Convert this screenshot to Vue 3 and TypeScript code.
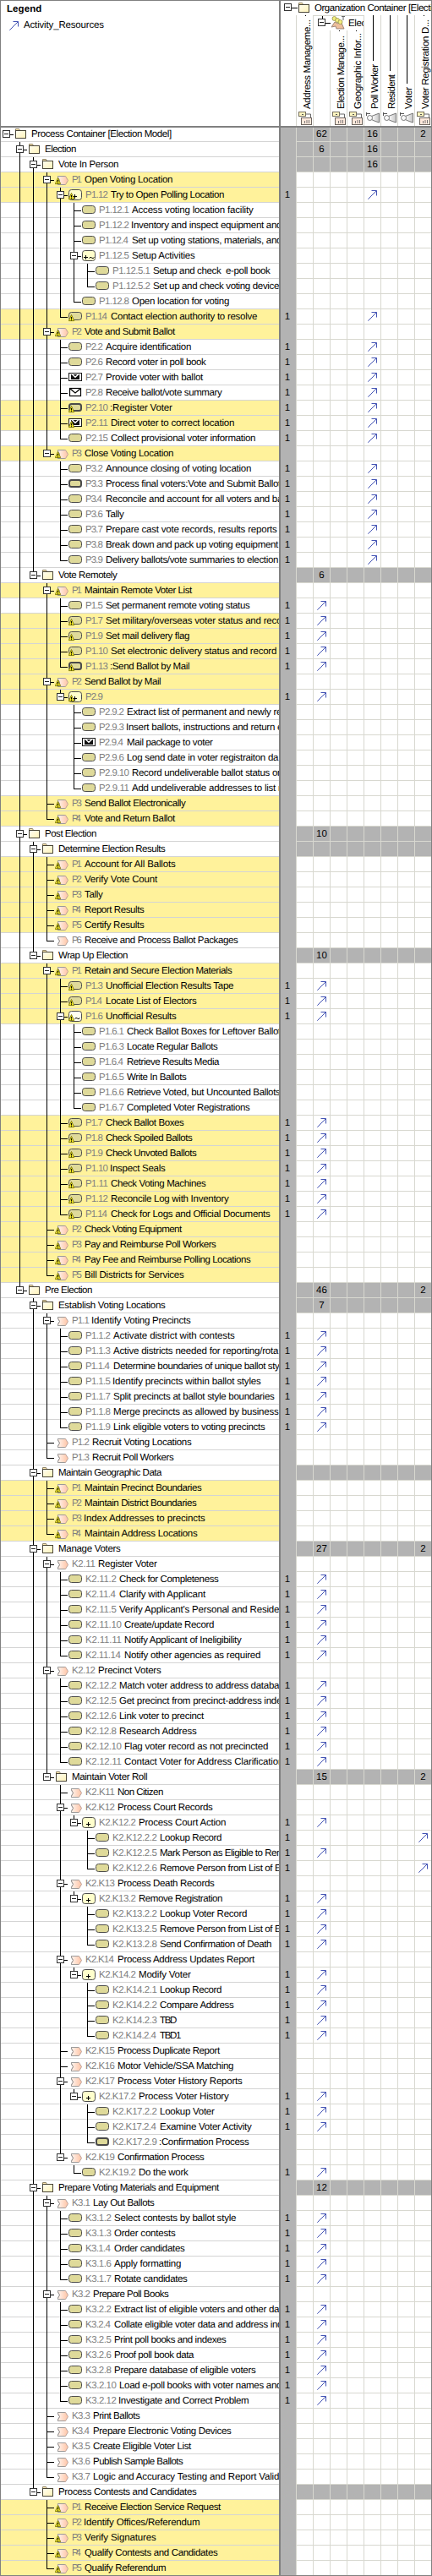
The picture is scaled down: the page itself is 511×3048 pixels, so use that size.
<script setup lang="ts">
type Kind = 'folder' | 'process' | 'task' | 'sub' | 'loop' | 'tilde' | 'call' | 'send' | 'receive'

interface Fit {
  marginLeft: string
  letterSpacing: string
  width: string
}

interface Row {
  depth: number
  kind: Kind
  warn: boolean
  code: string
  name: string
  codeStyle: Fit
  nameStyle: Fit
  cells: string[]
  arrow: number
  open: boolean
  path: string
}

const kinds: Record<string, Kind> = {
  f: 'folder', p: 'process', a: 'task', s: 'sub', l: 'loop', t: 'tilde', c: 'call', m: 'send', r: 'receive',
}

// depth | kind (upper case = warning) | code | name | arrow column, or column:total pairs | right edge of the label
const source = `
0|f||Process Container [Election Model]|1:62,4:16,7:2|203
1|f||Election|1:6,4:16|90
2|f||Vote In Person|4:16|140
3|P|P1|Open Voting Location||204
4|S|P1.12|Try to Open Polling Location|4|265
5|a|P1.12.1|Access voting location facility||300
5|a|P1.12.2|Inventory and inspect equipment and||333
5|a|P1.12.4|Set up voting stations, materials, and||333
5|l|P1.12.5|Setup Activities||231
6|a|P1.12.5.1|Setup and check  e-poll book||320
6|a|P1.12.5.2|Set up and check voting devices||336
5|a|P1.12.8|Open location for voting||271
4|A|P1.14|Contact election authority to resolve|4|304
3|P|P2|Vote and Submit Ballot||208
4|a|P2.2|Acquire identification|4|226
4|a|P2.6|Record voter in poll book|4|244
4|m|P2.7|Provide voter with ballot|4|241
4|r|P2.8|Receive ballot/vote summary|4|263
4|C|P2.10|:Register Voter|4|204
4|M|P2.11|Direct voter to correct location|4|277
4|a|P2.15|Collect provisional voter information|4|302
3|P|P3|Close Voting Location||205
4|a|P3.2|Announce closing of voting location|4|297
4|c|P3.3|Process final voters:Vote and Submit Ballot|4|333
4|a|P3.4|Reconcile and account for all voters and ba|4|335
4|a|P3.6|Tally|4|147
4|a|P3.7|Prepare cast vote records, results reports|4|328
4|a|P3.8|Break down and pack up voting equipment|4|330
4|a|P3.9|Delivery ballots/vote summaries to election|4|329
2|f||Vote Remotely|1:6|139
3|P|P1|Maintain Remote Voter List||228
4|a|P1.5|Set permanent remote voting status|1|296
4|A|P1.7|Set military/overseas voter status and reco|1|333
4|A|P1.9|Set mail delivery flag|1|224
4|A|P1.10|Set electronic delivery status and record|1|327
4|C|P1.13|:Send Ballot by Mail|1|224
3|P|P2|Send Ballot by Mail||190
4|S|P2.9||1|122
5|a|P2.9.2|Extract list of permanent and newly re||333
5|a|P2.9.3|Insert ballots, instructions and return e||334
5|m|P2.9.4|Mail package to voter||252
5|a|P2.9.6|Log send date in voter registraiton da||330
5|a|P2.9.10|Record undeliverable ballot status on||334
5|a|P2.9.11|Add undeliverable addresses to list m||338
3|P|P3|Send Ballot Electronically||220
3|P|P4|Vote and Return Ballot||208
1|f||Post Election|1:10|114
2|f||Determine Election Results||196
3|P|P1|Account for All Ballots||208
3|P|P2|Verify Vote Count||187
3|P|P3|Tally||122
3|P|P4|Report Results||171
3|P|P5|Certify Results||171
3|p|P6|Receive and Process Ballot Packages||282
2|f||Wrap Up Election|1:10|151
3|P|P1|Retain and Secure Election Materials||275
4|A|P1.3|Unofficial Election Results Tape|1|276
4|A|P1.4|Locate List of Electors|1|233
4|T|P1.6|Unofficial Results|1|209
5|a|P1.6.1|Check Ballot Boxes for Leftover Ballot||333
5|a|P1.6.3|Locate Regular Ballots||258
5|a|P1.6.4|Retrieve Results Media||260
5|a|P1.6.5|Write In Ballots||221
5|a|P1.6.6|Retrieve Voted, but Uncounted Ballots||332
5|a|P1.6.7|Completed Voter Registrations||296
4|A|P1.7|Check Ballot Boxes|1|218
4|A|P1.8|Check Spoiled Ballots|1|228
4|A|P1.9|Check Unvoted Ballots|1|233
4|A|P1.10|Inspect Seals|1|196
4|A|P1.11|Check Voting Machines|1|244
4|A|P1.12|Reconcile Log with Inventory|1|271
4|A|P1.14|Check for Logs and Official Documents|1|320
3|P|P2|Check Voting Equipment||216
3|P|P3|Pay and Reimburse Poll Workers||256
3|P|P4|Pay Fee and Reimburse Polling Locations||297
3|P|P5|Bill Districts for Services||218
1|f||Pre Election|1:46,7:2|109
2|f||Establish Voting Locations|1:7|196
3|p|P1.1|Identify Voting Precincts||226
4|a|P1.1.2|Activate district with contests|1|278
4|a|P1.1.3|Active districts needed for reporting/rota|1|330
4|a|P1.1.4|Determine boundaries of unique ballot sty|1|331
4|a|P1.1.5|Identify precincts within ballot styles|1|309
4|a|P1.1.7|Split precincts at ballot style boundaries|1|325
4|a|P1.1.8|Merge precincts as allowed by business|1|330
4|a|P1.1.9|Link eligible voters to voting precincts|1|314
3|p|P1.2|Recruit Voting Locations||227
3|p|P1.3|Recruit Poll Workers||206
2|f||Maintain Geographic Data||192
3|P|P1|Maintain Precinct Boundaries||239
3|P|P2|Maintain District Boundaries||233
3|P|P3|Index Addresses to precincts||243
3|P|P4|Maintain Address Locations||234
2|f||Manage Voters|1:27,7:2|143
3|p|K2.11|Register Voter||186
4|a|K2.11.2|Check for Completeness|1|259
4|a|K2.11.4|Clarify with Applicant|1|244
4|a|K2.11.5|Verify Applicant's Personal and Reside|1|330
4|a|K2.11.10|Create/update Record|1|253
4|a|K2.11.11|Notify Applicant of Ineligibility|1|286
4|a|K2.11.14|Notify other agencies as required|1|308
3|p|K2.12|Precinct Voters||191
4|a|K2.12.2|Match voter address to address databa|1|331
4|a|K2.12.5|Get precinct from precinct-address inde|1|333
4|a|K2.12.6|Link voter to precinct|1|242
4|a|K2.12.8|Research Address|1|233
4|a|K2.12.10|Flag voter record as not precincted|1|317
4|a|K2.12.11|Contact Voter for Address Clarification|1|335
3|f||Maintain Voter Roll|1:15,7:2|174
4|p|K2.K11|Non Citizen||193
4|p|K2.K12|Process Court Records||252
5|s|K2.K12.2|Process Court Action|1|267
6|a|K2.K12.2.2|Lookup Record|7|262
6|a|K2.K12.2.5|Mark Person as Eligible to Rem|1|336
6|a|K2.K12.2.6|Remove Person from List of E|7|333
4|p|K2.K13|Process Death Records||254
5|s|K2.K13.2|Remove Registration|1|263
6|a|K2.K13.2.2|Lookup Voter Record|1|292
6|a|K2.K13.2.5|Remove Person from List of E|1|333
6|a|K2.K13.2.8|Send Confirmation of Death|1|321
4|p|K2.K14|Process Address Updates Report||302
5|s|K2.K14.2|Modify Voter|1|226
6|a|K2.K14.2.1|Lookup Record|1|262
6|a|K2.K14.2.2|Compare Address|1|277
6|a|K2.K14.2.3|TBD|1|209
6|a|K2.K14.2.4|TBD1|1|214
4|p|K2.K15|Process Duplicate Report||261
4|p|K2.K16|Motor Vehicle/SSA Matching||276
4|p|K2.K17|Process Voter History Reports||287
5|s|K2.K17.2|Process Voter History|1|271
6|a|K2.K17.2.2|Lookup Voter|1|254
6|a|K2.K17.2.4|Examine Voter Activity|1|298
6|c|K2.K17.2.9|:Confirmation Process||295
4|p|K2.K19|Confirmation Process||242
5|a|K2.K19.2|Do the work|1|223
2|f||Prepare Voting Materials and Equipment|1:12|260
3|p|K3.1|Lay Out Ballots||183
4|a|K3.1.2|Select contests by ballot style|1|279
4|a|K3.1.3|Order contests|1|208
4|a|K3.1.4|Order candidates|1|219
4|a|K3.1.6|Apply formatting|1|214
4|a|K3.1.7|Rotate candidates|1|222
3|p|K3.2|Prepare Poll Books||200
4|a|K3.2.2|Extract list of eligible voters and other da|1|331
4|a|K3.2.4|Collate eligible voter data and address ind|1|334
4|a|K3.2.5|Print poll books and indexes|1|268
4|a|K3.2.6|Proof poll book data|1|230
4|a|K3.2.8|Prepare database of eligible voters|1|303
4|a|K3.2.10|Load e-poll books with voter names and|1|333
4|a|K3.2.12|Investigate and Correct Problem|1|294
3|p|K3.3|Print Ballots||166
3|p|K3.4|Prepare Electronic Voting Devices||274
3|p|K3.5|Create Eligible Voter List||227
3|p|K3.6|Publish Sample Ballots||217
3|p|K3.7|Logic and Accuracy Testing and Report Valid||330
2|f||Process Contests and Candidates||233
3|P|P1|Receive Election Service Request||262
3|P|P2|Identify Offices/Referendum||236
3|P|P3|Verify Signatures||185
3|P|P4|Qualify Contests and Candidates||258
3|P|P5|Qualify Referendum||196
`

const lines = source.trim().split('\n').map((l) => l.split('|'))
const depths = lines.map((l) => Number(l[0]))

const pen = document.createElement('canvas').getContext('2d')!
pen.font = '11.5px "Liberation Sans"'
;(pen as any).textRendering = 'geometricPrecision'

// letter spacing that makes the ink of `text` span `ink` pixels inside a box of `box` pixels
function fit(text: string, ink: number, box: number): Fit {
  if (!text) return { marginLeft: '0px', letterSpacing: '0px', width: '0px' }
  const m = pen.measureText(text)
  const natural = m.actualBoundingBoxRight + m.actualBoundingBoxLeft
  const gap = text.length > 1 ? (ink - natural) / (text.length - 1) : 0
  const shift = m.actualBoundingBoxLeft
  return {
    marginLeft: `${shift.toFixed(2)}px`,
    letterSpacing: `${gap.toFixed(3)}px`,
    width: `${(box - shift).toFixed(2)}px`,
  }
}

function codeWidth(code: string): number {
  if (!code) return 0
  let w = 3
  for (const ch of code) w += ch === '.' ? 3 : ch === 'K' ? 7 : 6
  return w
}

// true when the branch at `level` goes on below row i
function continues(i: number, level: number): boolean {
  for (let j = i + 1; j < depths.length; j++) {
    if (depths[j] < level) return false
    if (depths[j] === level) return true
  }
  return false
}

function guidePath(i: number, open: boolean): string {
  const d = depths[i]
  let p = ''
  for (let k = 1; k < d; k++) {
    if (continues(i, k)) p += `M${7 + 16 * k} 0h1v18h-1z`
  }
  const x = 7 + 16 * d
  const next = continues(i, d)
  if (open) {
    if (d > 0) p += `M${x} 0h1v4h-1z`
    if (next) p += `M${x} 13h1v5h-1z`
    p += `M${x + 5} 9h4v1h-4z`
  } else {
    p += `M${x} 0h1v${next ? 18 : 10}h-1z`
    p += `M${x + 1} 9h8v1h-8z`
  }
  return p
}

const rows: Row[] = lines.map((l, i) => {
  const depth = depths[i]
  const open = i + 1 < depths.length && depths[i + 1] > depth
  const cells: string[] = Array(8).fill('')
  let arrow = -1
  if (l[4].includes(':')) {
    for (const pair of l[4].split(',')) {
      const [c, v] = pair.split(':')
      cells[Number(c)] = v
    }
  } else if (l[4]) {
    arrow = Number(l[4])
  }
  const cw = codeWidth(l[2])
  const start = 37 + 16 * depth + cw
  const ink = Number(l[5]) - start
  return {
    depth,
    kind: kinds[l[1].toLowerCase()],
    warn: l[1] !== l[1].toLowerCase(),
    code: l[2],
    name: l[3],
    codeStyle: fit(l[2], cw - 3.5, cw),
    nameStyle: fit(l[3], ink, ink + 4),
    cells,
    arrow,
    open,
    path: guidePath(i, open),
  }
})

interface Col {
  name: string
  icon: string
  length: number
  stem: number
}

const addressCol: Col = { name: 'Address Manageme...', icon: 'system', length: 106, stem: 1 }
const groupCols: Col[] = [
  { name: 'Election Manage...', icon: 'system', length: 87, stem: 18 },
  { name: 'Geographic Infor...', icon: 'system', length: 90, stem: 18 },
]
const lastCols: Col[] = [
  { name: 'Poll Worker', icon: 'actor', length: 53, stem: 54 },
  { name: 'Resident', icon: 'actor', length: 41, stem: 66 },
  { name: 'Voter', icon: 'actor', length: 26, stem: 81 },
  { name: 'Voter Registration D...', icon: 'system', length: 106, stem: 1 },
]
</script>

<template>
  <svg class="defs" width="0" height="0">
    <defs>
      <linearGradient id="gFolder" x1="0" x2="1" y1="0" y2="1">
        <stop offset="0" stop-color="#fffef2" />
        <stop offset="1" stop-color="#fff3b8" />
      </linearGradient>
      <linearGradient id="gPeach" x1="0" x2="1">
        <stop offset="0" stop-color="#fff4ee" />
        <stop offset="1" stop-color="#ffc3a4" />
      </linearGradient>
      <linearGradient id="gGrey" x1="0" x2="1">
        <stop offset="0" stop-color="#ffffff" />
        <stop offset="1" stop-color="#c4c4c4" />
      </linearGradient>
      <symbol id="folder" viewBox="0 0 16 18">
        <path d="M1.5 4.5v-2h4l1 2z" fill="#ffe9b0" stroke="#8f8468" />
        <rect x="1.5" y="4.5" width="12" height="9" fill="url(#gFolder)" stroke="#4a4638" />
      </symbol>
      <symbol id="process" viewBox="0 0 16 18">
        <path d="M3.5 4.5h9l3 5-3 5h-9v-1.500l2-3.500-2-3.500z" fill="url(#gPeach)" stroke="#b9a199" />
        <path d="M3.500 4.500h8M3.500 14.500h8M3.500 4.500v1.500l2 3.500-2 3.500v1.500" fill="none" stroke="#9a9a9a" />
      </symbol>
      <symbol id="task" viewBox="0 0 16 18">
        <rect x=".5" y="3.500" width="15" height="9" rx="3" fill="#dfda9a" stroke="#4d4d4d" />
      </symbol>
      <symbol id="call" viewBox="0 0 16 18">
        <rect x="1" y="4" width="14" height="8" rx="2.500" fill="#dfda9a" stroke="#4a4a4a" stroke-width="2" />
      </symbol>
      <symbol id="sub" viewBox="0 0 16 18">
        <rect x=".5" y="2.500" width="15" height="12" rx="3" fill="#ffffcc" stroke="#4d4d4d" />
        <path d="M5 10h5v1H5zM7 8h1v5H7z" fill="#000" />
      </symbol>
      <symbol id="loop" viewBox="0 0 16 18">
        <rect x=".5" y="2.500" width="15" height="12" rx="3" fill="#ffffcc" stroke="#4d4d4d" />
        <path d="M2 10h5v1H2zM4 8h1v5H4z" fill="#000" />
        <path d="M8.500 11.500q1.500-2 3 -.5t3-.5" fill="none" stroke="#000" />
      </symbol>
      <symbol id="tilde" viewBox="0 0 16 18">
        <rect x=".5" y="2.500" width="15" height="12" rx="3" fill="#fffff0" stroke="#4d4d4d" />
        <path d="M7.500 11.500q1.500-2 3 -.5t3-.5" fill="none" stroke="#000" />
      </symbol>
      <symbol id="send" viewBox="0 0 16 18">
        <rect x="0" y="3" width="16" height="10" fill="#1a1a1a" />
        <rect x="1" y="4" width="14" height="8" fill="#fff" />
        <rect x="3" y="5" width="10" height="6" fill="#111" />
        <path d="M4 4.500l4 3.700 4-3.700" fill="none" stroke="#fff" stroke-width="1.500" />
      </symbol>
      <symbol id="receive" viewBox="0 0 16 18">
        <rect x="1.500" y="3.500" width="13" height="9" fill="#fff" stroke="#000" stroke-width="1.200" />
        <path d="M2 4l6 5 6-5" fill="none" stroke="#000" stroke-width="1.300" />
      </symbol>
      <symbol id="warn" viewBox="0 0 16 18">
        <path d="M3.500 6.500L6.700 13.600H.3z" fill="#f4ea2c" stroke="#85800e" />
        <path d="M3 9h1v2.500H3zM3 12.200h1v1H3z" fill="#000" />
      </symbol>
      <symbol id="minus" viewBox="0 0 9 9">
        <rect x=".5" y=".5" width="8" height="8" fill="#fff" stroke="#333" />
        <path d="M2 4h5v1H2z" fill="#222" />
      </symbol>
      <symbol id="arrow" viewBox="0 0 11 11">
        <path d="M.3 10.700L10.300.7M4.500.500h6v6" fill="none" stroke="#4353b4" />
      </symbol>
      <symbol id="system" viewBox="0 0 16 16">
        <rect x=".5" y=".5" width="8" height="5" fill="#fff6c0" stroke="#76705e" />
        <path d="M4 3h2v1H4z" fill="#555" />
        <path d="M9 3h5.500v4" fill="none" stroke="#666" />
        <rect x="3.500" y="7.500" width="12" height="8" fill="#ffe9dc" stroke="#6e6660" />
        <path d="M7 11h1v3H7zM9.500 10h1v4h-1zM12 10h1v4h-1z" fill="#777" />
      </symbol>
      <symbol id="actor" viewBox="0 0 16 16">
        <path d="M6.500 5.500L15.500 2v11L11 11.500 6.500 9.500z" fill="url(#gGrey)" stroke="#777" />
        <circle cx="4.500" cy="7.500" r="3" fill="#f8f8f8" stroke="#777" />
        <path d="M.5 1v4M.5 2.500h4.500" fill="none" stroke="#555" />
      </symbol>
      <symbol id="group" viewBox="0 0 16 16">
        <path d="M0 13l4-6 4 2 3-3 4 9H6l-1-3z" fill="#eebf9c" stroke="#8b7264" stroke-width=".8" />
        <circle cx="3.500" cy="3" r="2.500" fill="#f3ee7d" stroke="#96924e" stroke-width=".8" />
        <circle cx="7" cy="5" r="2.500" fill="#f3ee7d" stroke="#96924e" stroke-width=".8" />
        <circle cx="10.500" cy="7" r="2.500" fill="#f3ee7d" stroke="#96924e" stroke-width=".8" />
        <path d="M12 .5h4M14 1v4" fill="none" stroke="#666" />
      </symbol>
    </defs>
  </svg>
  <div class="matrix">
    <div class="head">
      <div class="legend">
        <div class="legend-title">Legend</div>
        <div class="legend-item">
          <svg width="11" height="11"><use href="#arrow" /></svg>
          <span>Activity_Resources</span>
        </div>
      </div>
      <div class="cols">
        <div class="org">
          <svg width="39" height="17">
            <path d="M13 8h7v1h-7z" fill="#000" />
            <use href="#minus" x="4" y="3" width="9" height="9" />
            <use href="#folder" x="20" y="0" width="16" height="18" />
          </svg>
          <span>Organization Container [Election Model]</span>
        </div>
        <div class="col-row">
          <div class="gap"></div>
          <div class="col">
            <svg class="vlabel" width="19" height="131">
              <rect x="10" y="0" width="1" :height="addressCol.stem" />
              <text transform="translate(15.500 111) rotate(-90)" :textLength="addressCol.length">{{ addressCol.name }}</text>
              <use :href="'#' + addressCol.icon" x="2" y="114" width="16" height="16" />
            </svg>
          </div>
          <div class="group">
            <div class="group-head">
              <svg width="41" height="17">
                <path d="M10 0h1v3h-1zM14 8h6v1h-6z" fill="#000" />
                <use href="#minus" x="5" y="3" width="9" height="9" />
                <use href="#group" x="21" y="0" width="16" height="16" />
              </svg>
              <span>Elec</span>
            </div>
            <div class="group-cols">
              <div class="col first"></div>
              <div v-for="c in groupCols" :key="c.name" class="col">
                <svg class="vlabel" width="19" height="113" viewBox="0 18 19 113">
                  <rect x="10" y="18" width="1" height="1" />
                  <text transform="translate(15.500 111) rotate(-90)" :textLength="c.length">{{ c.name }}</text>
                  <use :href="'#' + c.icon" x="2" y="114" width="16" height="16" />
                </svg>
              </div>
            </div>
          </div>
          <div v-for="c in lastCols" :key="c.name" class="col">
            <svg class="vlabel" width="19" height="131">
              <rect x="10" y="0" width="1" :height="c.stem" />
              <text transform="translate(15.500 111) rotate(-90)" :textLength="c.length">{{ c.name }}</text>
              <use :href="'#' + c.icon" x="2" y="114" width="16" height="16" />
            </svg>
          </div>
        </div>
      </div>
    </div>
    <div class="body">
      <div v-for="(r, i) in rows" :key="i" class="row">
        <div class="tree" :class="{ hot: r.warn }">
          <svg class="guides" :width="33 + 16 * r.depth" height="18">
            <path :d="r.path" fill="#000" />
            <use v-if="r.open" href="#minus" :x="3 + 16 * r.depth" y="4" width="9" height="9" />
            <use :href="'#' + r.kind" :x="17 + 16 * r.depth" y="0" width="16" height="18" />
            <use v-if="r.warn" href="#warn" :x="17 + 16 * r.depth" y="0" width="16" height="18" />
          </svg>
          <span v-if="r.code" class="code" :style="r.codeStyle">{{ r.code }}</span>
          <span v-if="r.name" class="name" :style="r.nameStyle">{{ r.name }}</span>
        </div>
        <div class="count">{{ r.arrow >= 0 ? '1' : '' }}</div>
        <div v-for="(c, k) in r.cells" :key="k" class="cell" :class="{ total: r.kind === 'folder' }">
          <svg v-if="r.arrow === k" width="11" height="11"><use href="#arrow" /></svg>
          <template v-else>{{ c }}</template>
        </div>
      </div>
    </div>
  </div>
</template>

<style>
body {
  margin: 0;
  background: #fff;
}
</style>

<style scoped>
.defs {
  display: block;
}
svg {
  display: block;
  flex: none;
}
.matrix {
  box-sizing: border-box;
  width: 511px;
  height: 3048px;
  border: 1px solid #808080;
  background: #fff;
  font: 11.5px/18px "Liberation Sans", Arial, sans-serif;
  text-rendering: geometricPrecision;
  color: #000;
  overflow: hidden;
}
.head {
  display: flex;
  height: 148px;
  border-bottom: 2px solid #808080;
}
.legend {
  width: 329px;
  border-right: 2px solid #808080;
  flex: none;
}
.legend-title {
  font-weight: bold;
  letter-spacing: 0.1px;
  padding: 1px 0 0 7px;
}
.legend-item {
  display: flex;
  align-items: center;
  gap: 6px;
  padding: 1px 0 0 10px;
  letter-spacing: -0.16px;
}
.cols {
  width: 178px;
  overflow: hidden;
}
.org {
  display: flex;
  height: 17px;
  white-space: nowrap;
  letter-spacing: -0.46px;
}
.org span {
  margin-left: 1px;
}
.col-row {
  display: flex;
  height: 131px;
}
.gap {
  width: 18px;
  flex: none;
}
.col {
  box-sizing: border-box;
  width: 20px;
  flex: none;
  border-left: 1px solid #d6d6ce;
  overflow: hidden;
}
.col.first {
  border-left: 0;
  width: 19px;
}
.vlabel {
  font-size: 11.5px;
}
.group {
  box-sizing: border-box;
  width: 60px;
  border: 1px solid #d6d6ce;
  border-width: 1px 0 0 1px;
  display: flex;
  flex-direction: column;
  overflow: hidden;
}
.group-head {
  display: flex;
  height: 17px;
  white-space: nowrap;
  line-height: 19px;
  letter-spacing: -0.4px;
}
.group-cols {
  display: flex;
  flex: 1;
}
.body {
  display: flex;
  flex-direction: column;
}
.row {
  display: flex;
  align-items: flex-end;
  height: 18px;
  flex: none;
  overflow: hidden;
}
.row:first-child {
  height: 17px;
}
.tree {
  display: flex;
  width: 329px;
  height: 18px;
  flex: none;
  overflow: hidden;
  border-right: 2px solid #808080;
  box-shadow: inset 0 -1px #d4d4d4;
}
.tree.hot {
  background: #fff29b;
}
.guides {
  margin: 0 4px 0 -1px;
}
.code,
.name {
  flex: none;
  white-space: pre;
}
.code {
  color: #808080;
}
.count {
  width: 16px;
  padding-right: 2px;
  height: 18px;
  background: #b3b3b3;
  text-align: center;
  flex: none;
}
.cell {
  box-sizing: border-box;
  width: 20px;
  height: 18px;
  flex: none;
  border-left: 1px solid #d8d8d0;
  border-bottom: 1px solid #d8d8d0;
  display: flex;
  justify-content: center;
}
.cell.total {
  background: #b3b3b3;
}
.cell svg {
  margin-top: 3px;
}
</style>
